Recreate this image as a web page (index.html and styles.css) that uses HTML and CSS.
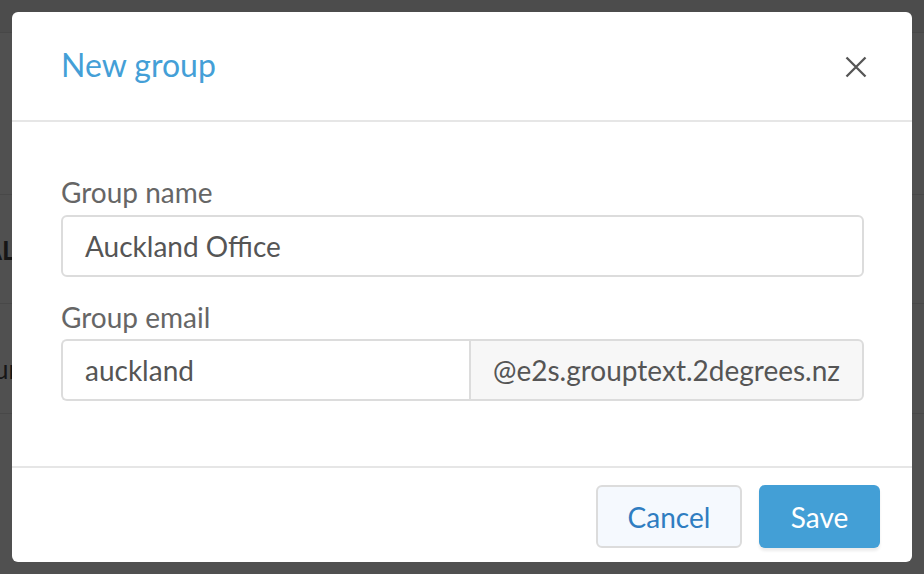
FILE: index.html
```html
<!DOCTYPE html>
<html>
<head>
<meta charset="utf-8">
<link rel="stylesheet" href="styles.css">
</head>
<body>
<div class="page">
  <div class="bg-top"></div>
  <div class="bg-row bg-row-1"></div>
  <div class="bg-row bg-row-2"><span class="bg-text bg-text-1">ALL</span></div>
  <div class="bg-row bg-row-3"><span class="bg-text bg-text-2">un</span></div>
</div>
<div class="modal">
  <div class="modal-header">
    <h2 class="modal-title">New group</h2>
    <button class="close" aria-label="Close">
      <svg width="22" height="22" viewBox="0 0 22 22"><path d="M1.5 1.5 L20.5 20.5 M20.5 1.5 L1.5 20.5" stroke="#555" stroke-width="2.3" fill="none"/></svg>
    </button>
  </div>
  <div class="modal-body">
    <label class="label">Group name</label>
    <div class="input">Auckland Office</div>
    <label class="label label-2">Group email</label>
    <div class="input-group">
      <div class="input input-left">auckland</div>
      <div class="addon">@e2s.grouptext.2degrees.nz</div>
    </div>
  </div>
  <div class="modal-footer">
    <button class="btn btn-cancel">Cancel</button>
    <button class="btn btn-save">Save</button>
  </div>
</div>
</body>
</html>
```
FILE: styles.css
```css
* { box-sizing: border-box; }
html, body { margin: 0; padding: 0; }
body {
  width: 924px;
  height: 574px;
  overflow: hidden;
  background: #505050;
  font-family: Lato, "Open Sans", sans-serif;
  position: relative;
}
.page { display: flex; flex-direction: column; }
.bg-top { height: 33px; background: #4c4c4c; border-bottom: 1px solid #474747; }
.bg-row {
  border-bottom: 1px solid #484848;
  display: flex;
  align-items: center;
}
.bg-row-1 { height: 162px; }
.bg-row-2 { height: 109px; padding-top: 2px; }
.bg-row-3 { height: 110px; padding-top: 20px; }
.bg-text { color: #161616; font-size: 26px; font-weight: 700; margin-left: -16px; }
.bg-text-2 { margin-left: -6px; font-weight: 400; }

.modal {
  position: absolute;
  left: 12px;
  top: 12px;
  width: 900px;
  height: 550px;
  background: #fff;
  border-radius: 6px;
  display: flex;
  flex-direction: column;
}
.modal-header {
  height: 110px;
  border-bottom: 2px solid #e6e6e6;
  display: flex;
  align-items: center;
  justify-content: space-between;
  padding: 0 45px 0 49px;
}
.modal-title {
  margin: 0;
  font-size: 32px;
  font-weight: 400;
  color: #449fd7;
  line-height: 1;
  padding-bottom: 2px;
}
.close {
  border: 0;
  background: none;
  padding: 0;
  width: 22px;
  height: 22px;
  display: flex;
  margin-top: 2px;
}
.modal-body {
  flex: 1;
  padding: 55px 48px 0 49px;
  display: flex;
  flex-direction: column;
}
.label {
  font-size: 28px;
  line-height: 30px;
  color: #666;
  margin-bottom: 8px;
}
.label-2 { margin-top: 25px; margin-bottom: 7px; }
.input {
  height: 62px;
  border: 2px solid #dcdcdc;
  border-radius: 6px;
  font-size: 28px;
  color: #555;
  padding: 0 22px;
  display: flex;
  align-items: center;
}
.input-group { display: flex; height: 62px; }
.input-left {
  flex: 1;
  border-radius: 6px 0 0 6px;
  border-right: 0;
}
.addon {
  border: 2px solid #dcdcdc;
  border-radius: 0 6px 6px 0;
  background: #f7f7f7;
  font-size: 28px;
  color: #555;
  padding: 0 22px;
  display: flex;
  align-items: center;
}
.modal-footer {
  border-top: 2px solid #e6e6e6;
  padding: 17px 32px 14px 0;
  display: flex;
  justify-content: flex-end;
  gap: 17px;
}
.btn {
  height: 63px;
  font-family: Lato, "Open Sans", sans-serif;
  font-size: 28px;
  border-radius: 6px;
  padding: 0;
  display: flex;
  align-items: center;
  justify-content: center;
}
.btn-cancel {
  width: 146px;
  background: #f5f9fe;
  border: 2px solid #dcdcdc;
  color: #2f7dc1;
}
.btn-save {
  width: 121px;
  background: #439fd6;
  border: 0;
  color: #fff;
  box-shadow: 0 3px 3px rgba(0,0,0,0.08);
}
```
